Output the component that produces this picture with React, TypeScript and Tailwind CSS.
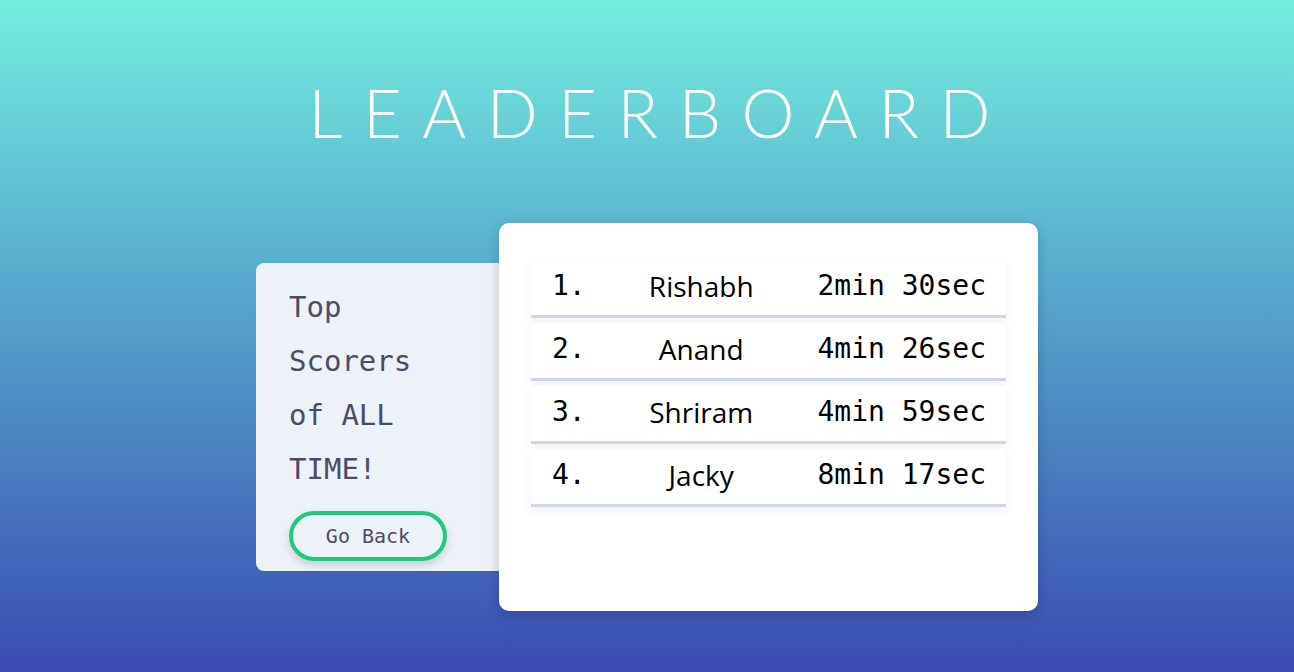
import React from "react";

const rows = [
  { rank: "1.", name: "Rishabh", time: "2min 30sec" },
  { rank: "2.", name: "Anand", time: "4min 26sec" },
  { rank: "3.", name: "Shriram", time: "4min 59sec" },
  { rank: "4.", name: "Jacky", time: "8min 17sec" },
];

export default function App() {
  return (
    <div className="w-full h-[672px] bg-gradient-to-b from-[#74eedc] to-[#3b4ab2] flex flex-col items-center overflow-hidden">
      <h1
        className="mt-[70px] ml-[5px] text-white text-[67px] leading-[84px] font-light tracking-[20.5px] pl-[20.5px]"
        style={{ fontFamily: "Lato, 'Open Sans', sans-serif" }}
      >
        LEADERBOARD
      </h1>
      <div className="mt-[69px] flex items-center">
        <div className="w-[243px] h-[308px] bg-[#edf1f8] rounded-l-[8px] pl-[33px] pt-[17px] flex flex-col text-[#4b4b68]" style={{ fontFamily: "'DejaVu Sans Mono', monospace" }}>
          <div className="text-[29px] leading-[54px]">
            <div>Top</div>
            <div>Scorers</div>
            <div>of ALL</div>
            <div>TIME!</div>
          </div>
          <button className="mt-[15px] w-[158px] h-[50px] rounded-full border-[4px] border-[#1ec97c] text-[20px] text-[#4b4b68] shadow-[0_4px_8px_rgba(0,0,0,0.15)]">
            Go Back
          </button>
        </div>
        <div className="w-[539px] h-[388px] bg-white rounded-[10px] shadow-[0_4px_14px_rgba(0,0,0,0.18)] px-[32px] pt-[37px] flex flex-col gap-[5px]">
          {rows.map((r) => (
            <div
              key={r.rank}
              className="h-[58px] flex items-center border-b-[3px] border-[#cdd5e6] shadow-[0_4px_10px_rgba(0,0,0,0.06)] bg-white text-black text-[28px] pb-[4px]"
            >
              <span className="w-[100px] pl-[21px]" style={{ fontFamily: "'DejaVu Sans Mono', monospace" }}>{r.rank}</span>
              <span className="flex-1 text-center pr-[46px]" style={{ fontFamily: "'Open Sans', sans-serif" }}>{r.name}</span>
              <span className="pr-[20px]" style={{ fontFamily: "'DejaVu Sans Mono', monospace" }}>{r.time}</span>
            </div>
          ))}
        </div>
      </div>
    </div>
  );
}
